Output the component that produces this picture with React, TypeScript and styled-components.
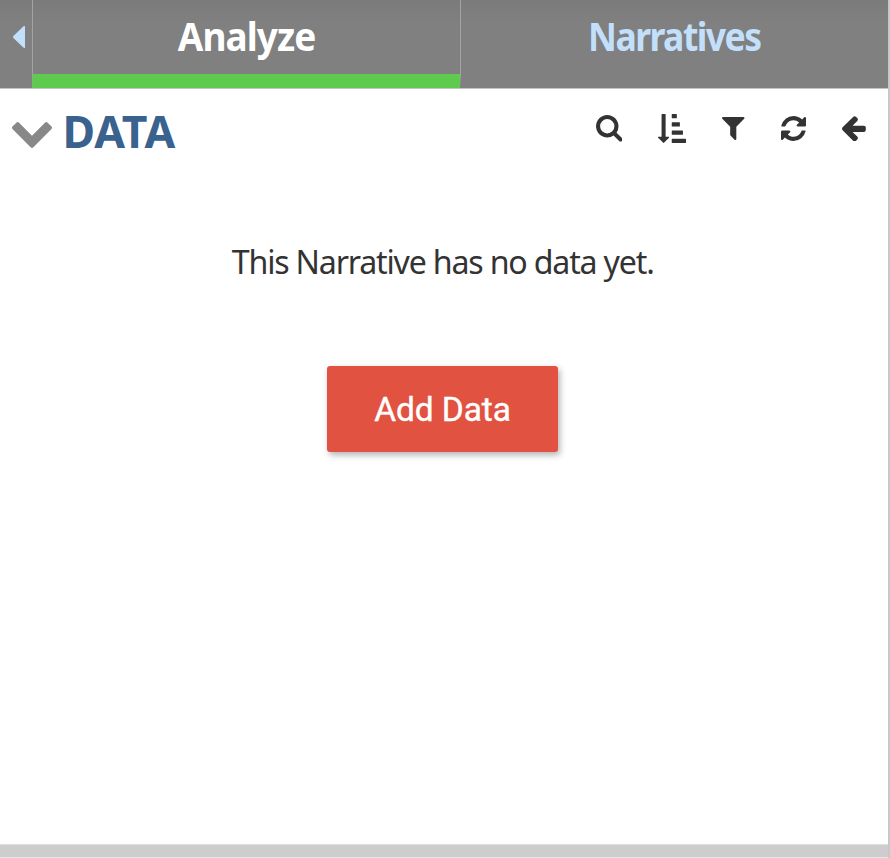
import React from "react";
import styled, { createGlobalStyle } from "styled-components";

const GlobalStyle = createGlobalStyle`
  * { box-sizing: border-box; }
  body { margin: 0; background: #fff; }
  button { border: 0; padding: 0; background: none; font: inherit; color: inherit; cursor: pointer; }
`;

const Panel = styled.main`
  display: flex;
  flex-direction: column;
  width: 890px;
  height: 858px;
  overflow: hidden;
  border-right: 2px solid #c8c8c8;
  background: #fff;
  color: #333;
  font-family: "Noto Sans", "Open Sans", sans-serif;
`;

const TabBar = styled.nav`
  display: flex;
  height: 89px;
  flex: none;
  border-bottom: 1px solid #c4c4c4;
  background: linear-gradient(#7b7b7b, #808080 24px);
`;

const Collapse = styled.button`
  display: flex;
  width: 32px;
  padding: 26px 0 0 12.5px;
  align-items: flex-start;
  color: #c2dffb;
`;

const Tab = styled.button<{ $active?: boolean }>`
  display: flex;
  flex: 1;
  height: 88px;
  justify-content: center;
  border-left: 1px solid #a3a3a3;
  border-bottom: 14px solid ${(p) => (p.$active ? "#5fcb4e" : "transparent")};
  color: ${(p) => (p.$active ? "#fff" : "#c2dffb")};
  background-clip: padding-box;
`;

const Label = styled.span<{ $size: number; $line: number; $weight?: number; $spacing?: number; $stretch?: number }>`
  display: block;
  font-size: ${(p) => p.$size}px;
  line-height: ${(p) => p.$line}px;
  font-weight: ${(p) => p.$weight ?? 400};
  letter-spacing: ${(p) => p.$spacing ?? 0}px;
  transform: scaleX(${(p) => p.$stretch ?? 1});
  white-space: nowrap;
`;

const Header = styled.header`
  display: flex;
  height: 88px;
  padding: 0 22.5px 0 11.5px;
  justify-content: space-between;
  align-items: flex-start;
`;

const Title = styled.h1`
  display: flex;
  margin: 0;
  gap: 11px;
  color: #3a628e;

  svg { margin-top: 33px; color: #888; }
  span { transform-origin: left; }
`;

const Tools = styled.div`
  display: flex;
  height: 79px;
  gap: 36px;
  align-items: center;

  button { display: flex; }
`;

const Body = styled.section`
  display: flex;
  flex: 1;
  flex-direction: column;
  align-items: center;
  padding: 59px 3px 0 0;
`;

const Message = styled.p`
  margin: 0 0 80px;
`;

const AddButton = styled.button`
  display: flex;
  width: 231px;
  height: 86px;
  justify-content: center;
  border-radius: 3px;
  background: #e25241;
  box-shadow: 2px 3px 6px rgba(0, 0, 0, 0.3);
  color: #fff;
  font-family: Roboto, sans-serif;
  -webkit-text-stroke: 0.4px #fff;
`;

const Divider = styled.footer`
  height: 14px;
  flex: none;
  border-top: 1px solid #dedede;
  border-bottom: 1px solid #e6e6e6;
  background: #cdcdcd;
`;

const Glyph = ({ w, h, box, d }: { w: number; h: number; box: string; d: string }) => (
  <svg width={w} height={h} viewBox={box} fill="currentColor" preserveAspectRatio="none">
    <path fillRule="evenodd" d={d} />
  </svg>
);

const tools = [
  {
    name: "Search", w: 26.6, h: 26.6, box: "0 0 1664 1664",
    d: "M1152 704q0 185-131.5 316.5T704 1152 387.5 1020.5 256 704 387.5 387.5 704 256t316.5 131.5T1152 704zm512 832q0 52-38 90t-90 38q-54 0-90-38l-343-342q-179 124-399 124-143 0-273.5-55.5t-225-150-150-225T0 704t55.5-273.5 150-225 225-150T704 0t273.5 55.5 225 150 150 225T1408 704q0 220-124 399l343 343q37 37 37 90z",
  },
  {
    name: "Sort", w: 28, h: 29, box: "32 0 1760 1792",
    d: "M736 1440q0 12-10 24l-319 319q-10 9-23 9-12 0-23-9l-320-320q-15-16-7-35 8-20 30-20h192V32q0-14 9-23t23-9h192q14 0 23 9t9 23v1376h192q14 0 23 9t9 23zM928 1536h832q32 0 32 32v192q0 32-32 32H928q-32 0-32-32v-192q0-32 32-32zM928 1024h640q32 0 32 32v192q0 32-32 32H928q-32 0-32-32v-192q0-32 32-32zM928 512h448q32 0 32 32v192q0 32-32 32H928q-32 0-32-32V544q0-32 32-32zM928 0h256q32 0 32 32v192q0 32-32 32H928q-32 0-32-32V32q0-32 32-32z",
  },
  {
    name: "Filter", w: 22.5, h: 23, box: "192 256 1408 1408",
    d: "M1595 295q17 41-14 70l-493 493v742q0 42-39 59-13 5-25 5-27 0-45-19l-256-256q-19-19-19-45v-486l-493-493q-31-29-14-70 17-39 59-39h1280q42 0 59 39z",
  },
  {
    name: "Refresh", w: 25, h: 25, box: "128 128 1536 1536",
    d: "M1639 1056q0 5-1 7-64 268-268 434.5t-478 166.5q-146 0-282.5-55t-243.5-157l-129 129q-19 19-45 19t-45-19-19-45v-448q0-26 19-45t45-19h448q26 0 45 19t19 45-19 45l-137 137q71 66 161 102t187 36q134 0 250-65t186-179q11-17 53-117 8-23 30-23h192q13 0 22.5 9.5t9.5 22.5zm25-800v448q0 26-19 45t-45 19h-448q-26 0-45-19t-19-45 19-45l138-138q-148-137-349-137-134 0-250 65t-186 179q-11 17-53 117-8 23-30 23h-199q-13 0-22.5-9.5t-9.5-22.5v-7q65-268 270-434.5t480-166.5q146 0 284 55.5t245 156.5l130-129q19-19 45-19t45 19 19 45z",
  },
  {
    name: "Back", w: 23.8, h: 25, box: "192 161 1472 1558",
    d: "M1664 896v128q0 53-32.5 90.5t-84.5 37.5h-704l293 294q38 36 38 90t-38 90l-75 76q-37 37-90 37-52 0-91-37l-651-652q-37-37-37-90 0-52 37-91l651-650q38-38 91-38 52 0 90 38l75 74q38 38 38 91t-38 91l-293 293h704q52 0 84.5 37.5t32.5 90.5z",
  },
];

export default function App() {
  return (
    <>
      <GlobalStyle />
      <Panel>
        <TabBar>
          <Collapse aria-label="Collapse panel">
            <Glyph w={12.5} h={22} box="0 0 12.5 22" d="M12.5 1.2v19.6q0 1.2-1.2 1.2-.5 0-1-.4L.4 11.9q-.8-.9 0-1.8L10.3.4q.5-.4 1-.4 1.2 0 1.2 1.2z" />
          </Collapse>
          <Tab $active>
            <Label $size={38.5} $line={73} $weight={700} $spacing={-1} $stretch={0.96}>Analyze</Label>
          </Tab>
          <Tab>
            <Label $size={38.5} $line={73} $weight={700} $spacing={-1.7} $stretch={0.925}>Narratives</Label>
          </Tab>
        </TabBar>
        <Header>
          <Title>
            <Glyph w={40} h={26} box="90 533 1612 1035" d="M1683 808l-742 741q-19 19-45 19t-45-19l-742-741q-19-19-19-45.5t19-45.5l166-165q19-19 45-19t45 19l531 531 531-531q19-19 45-19t45 19l166 165q19 19 19 45.5t-19 45.5z" />
            <Label $size={44.5} $line={83} $weight={700}>DATA</Label>
          </Title>
          <Tools>
            {tools.map(({ name, ...glyph }) => (
              <button key={name} aria-label={name}>
                <Glyph {...glyph} />
              </button>
            ))}
          </Tools>
        </Header>
        <Body>
          <Message>
            <Label $size={33.5} $line={50} $spacing={-1.25} $stretch={0.96}>This Narrative has no data yet.</Label>
          </Message>
          <AddButton>
            <Label $size={33.5} $line={88} $spacing={-0.1}>Add Data</Label>
          </AddButton>
        </Body>
        <Divider />
      </Panel>
    </>
  );
}
